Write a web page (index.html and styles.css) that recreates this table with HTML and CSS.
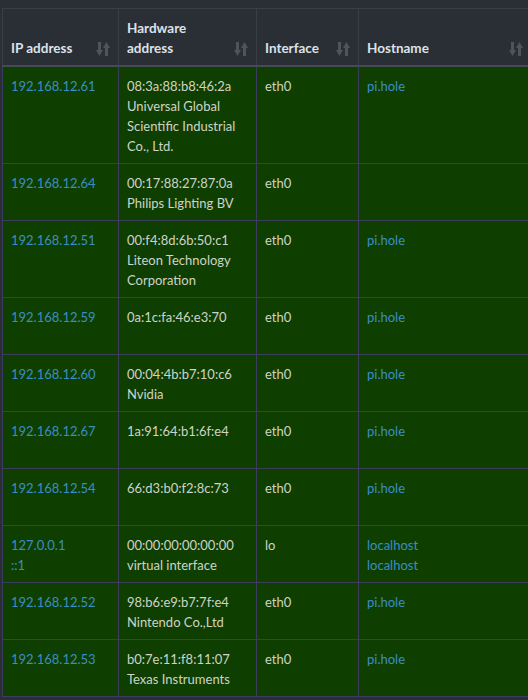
FILE: index.html
```html
<!DOCTYPE html>
<html>
<head>
<meta charset="utf-8">
<link rel="stylesheet" href="styles.css">
</head>
<body>
<div class="wrap">
<table class="net">
  <colgroup>
    <col class="c-ip"><col class="c-hw"><col class="c-if"><col class="c-host">
  </colgroup>
  <thead>
    <tr>
      <th><div class="th-in"><span>IP address</span><svg class="sort" viewBox="0 0 14 14"><rect x="2" y="0" width="3" height="9"/><polygon points="0,8 7,8 3.5,14"/><polygon points="7,6 14,6 10.5,0"/><rect x="9" y="5" width="3" height="9"/></svg></div></th>
      <th><div class="th-in"><span>Hardware<br>address</span><svg class="sort" viewBox="0 0 14 14"><rect x="2" y="0" width="3" height="9"/><polygon points="0,8 7,8 3.5,14"/><polygon points="7,6 14,6 10.5,0"/><rect x="9" y="5" width="3" height="9"/></svg></div></th>
      <th><div class="th-in"><span>Interface</span><svg class="sort" viewBox="0 0 14 14"><rect x="2" y="0" width="3" height="9"/><polygon points="0,8 7,8 3.5,14"/><polygon points="7,6 14,6 10.5,0"/><rect x="9" y="5" width="3" height="9"/></svg></div></th>
      <th><div class="th-in"><span>Hostname</span><svg class="sort" viewBox="0 0 14 14"><rect x="2" y="0" width="3" height="9"/><polygon points="0,8 7,8 3.5,14"/><polygon points="7,6 14,6 10.5,0"/><rect x="9" y="5" width="3" height="9"/></svg></div></th>
    </tr>
  </thead>
  <tbody>
    <tr><td class="link">192.168.12.61</td><td><div class="hw">08:3a:88:b8:46:2a<br>Universal Global Scientific Industrial Co., Ltd.</div></td><td>eth0</td><td class="link">pi.hole</td></tr>
    <tr><td class="link">192.168.12.64</td><td><div class="hw">00:17:88:27:87:0a<br>Philips Lighting BV</div></td><td>eth0</td><td class="link"></td></tr>
    <tr><td class="link">192.168.12.51</td><td><div class="hw">00:f4:8d:6b:50:c1<br>Liteon Technology Corporation</div></td><td>eth0</td><td class="link">pi.hole</td></tr>
    <tr><td class="link">192.168.12.59</td><td><div class="hw">0a:1c:fa:46:e3:70</div></td><td>eth0</td><td class="link">pi.hole</td></tr>
    <tr><td class="link">192.168.12.60</td><td><div class="hw">00:04:4b:b7:10:c6<br>Nvidia</div></td><td>eth0</td><td class="link">pi.hole</td></tr>
    <tr><td class="link">192.168.12.67</td><td><div class="hw">1a:91:64:b1:6f:e4</div></td><td>eth0</td><td class="link">pi.hole</td></tr>
    <tr><td class="link">192.168.12.54</td><td><div class="hw">66:d3:b0:f2:8c:73</div></td><td>eth0</td><td class="link">pi.hole</td></tr>
    <tr><td class="link">127.0.0.1<br>::1</td><td><div class="hw">00:00:00:00:00:00<br>virtual interface</div></td><td>lo</td><td class="link">localhost<br>localhost</td></tr>
    <tr><td class="link">192.168.12.52</td><td><div class="hw">98:b6:e9:b7:7f:e4<br>Nintendo Co.,Ltd</div></td><td>eth0</td><td class="link">pi.hole</td></tr>
    <tr><td class="link">192.168.12.53</td><td><div class="hw">b0:7e:11:f8:11:07<br>Texas Instruments</div></td><td>eth0</td><td class="link">pi.hole</td></tr>
  </tbody>
</table>
</div>
</body>
</html>
```
FILE: styles.css
```css
html, body {
  margin: 0;
  padding: 0;
  background: #2a2e35;
  overflow: hidden;
}
.wrap {
  padding: 8px 0 0 2px;
  width: 540px;
}
.net {
  border-collapse: collapse;
  table-layout: fixed;
  width: 529px;
  font-family: Lato, "Open Sans", sans-serif;
  font-size: 13px;
  line-height: 20px;
  color: #cdd3c9;
}
.c-ip { width: 116px; }
.c-hw { width: 138px; }
.c-if { width: 102px; }
.c-host { width: 173px; }
.net th {
  background: #2a2e35;
  color: #dde2e8;
  font-size: 13.5px;
  font-weight: 700;
  text-align: left;
  vertical-align: bottom;
  padding: 9px 8px 7px;
  border: 1px solid #3a3e45;
  border-bottom: 2px solid #464a52;
}
.th-in {
  display: flex;
  justify-content: space-between;
  align-items: flex-end;
}
.sort {
  width: 14px;
  height: 14px;
  fill: #4f545b;
  flex: none;
  margin-bottom: 2px;
}
.net td {
  background: #0f3f00;
  vertical-align: top;
  padding: 9px 8px 7px;
  border: 1px solid #3c3d5e;
}
.hw {
  min-height: 40px;
}
.link {
  color: #3b8dc4;
}
```
